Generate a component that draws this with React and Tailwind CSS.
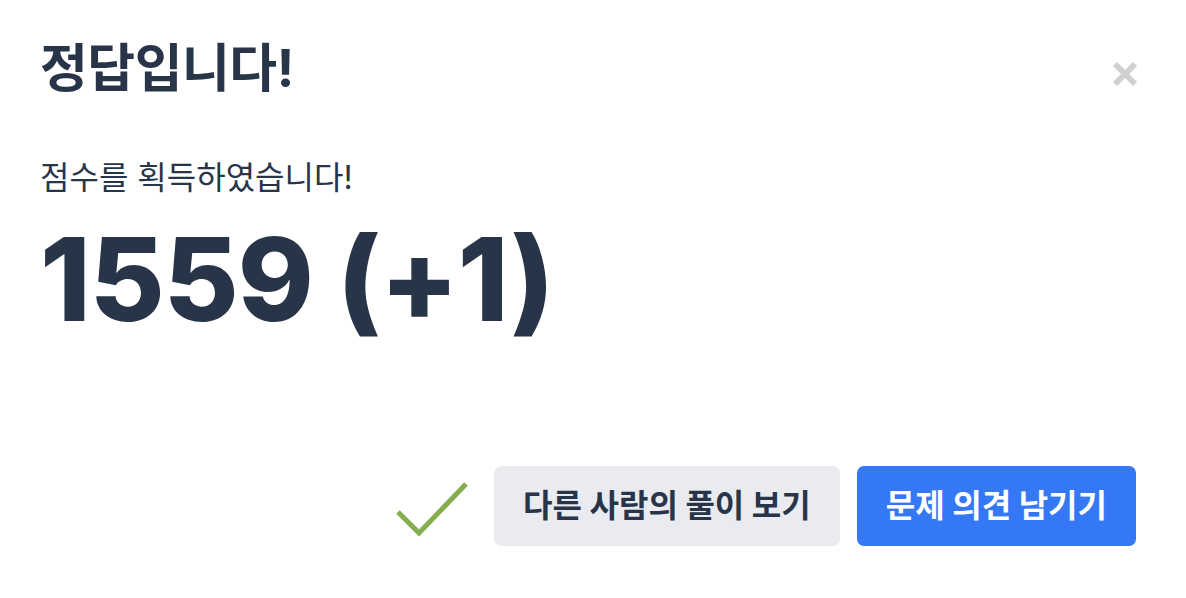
export default function App() {
  const ko = { fontFamily: 'Inter, "Noto Sans CJK KR", sans-serif' };
  return (
    <div className="w-[1186px] h-[598px] bg-white text-[#283548] flex flex-col pl-[40px] pr-[50px]" style={ko}>
      <div className="flex items-start justify-between pt-[34px]">
        <h1 className="text-[52px] font-bold leading-[70px] tracking-[-0.5px]">정답입니다!</h1>
        <button className="mt-[26px] mr-[-3px] w-[28px] h-[28px] flex items-center justify-center">
          <svg width="26" height="26" viewBox="0 0 26 26">
            <path d="M3 3 L23 23 M23 3 L3 23" stroke="#d0d0d0" strokeWidth="6" strokeLinecap="butt" />
          </svg>
        </button>
      </div>
      <p className="mt-[52px] text-[32px] leading-[44px]">점수를 획득하였습니다!</p>
      <div className="mt-[12px] text-[115px] font-extrabold leading-[136px] tracking-[-1px]">1559 (+1)</div>
      <div className="mt-[118px] flex items-center justify-end gap-[17px]">
        <svg width="76" height="60" viewBox="0 0 76 60" className="mr-[6px] mt-[6px]">
          <path d="M3 33 L24 54 L71 5" fill="none" stroke="#84ae4f" strokeWidth="5" />
        </svg>
        <button className="h-[80px] px-[29px] rounded-[7px] bg-[#e9ebf0] text-[32px] font-bold text-[#283548]">다른 사람의 풀이 보기</button>
        <button className="h-[80px] px-[29px] rounded-[7px] bg-[#3578f6] text-[32px] font-bold text-white">문제 의견 남기기</button>
      </div>
    </div>
  );
}
